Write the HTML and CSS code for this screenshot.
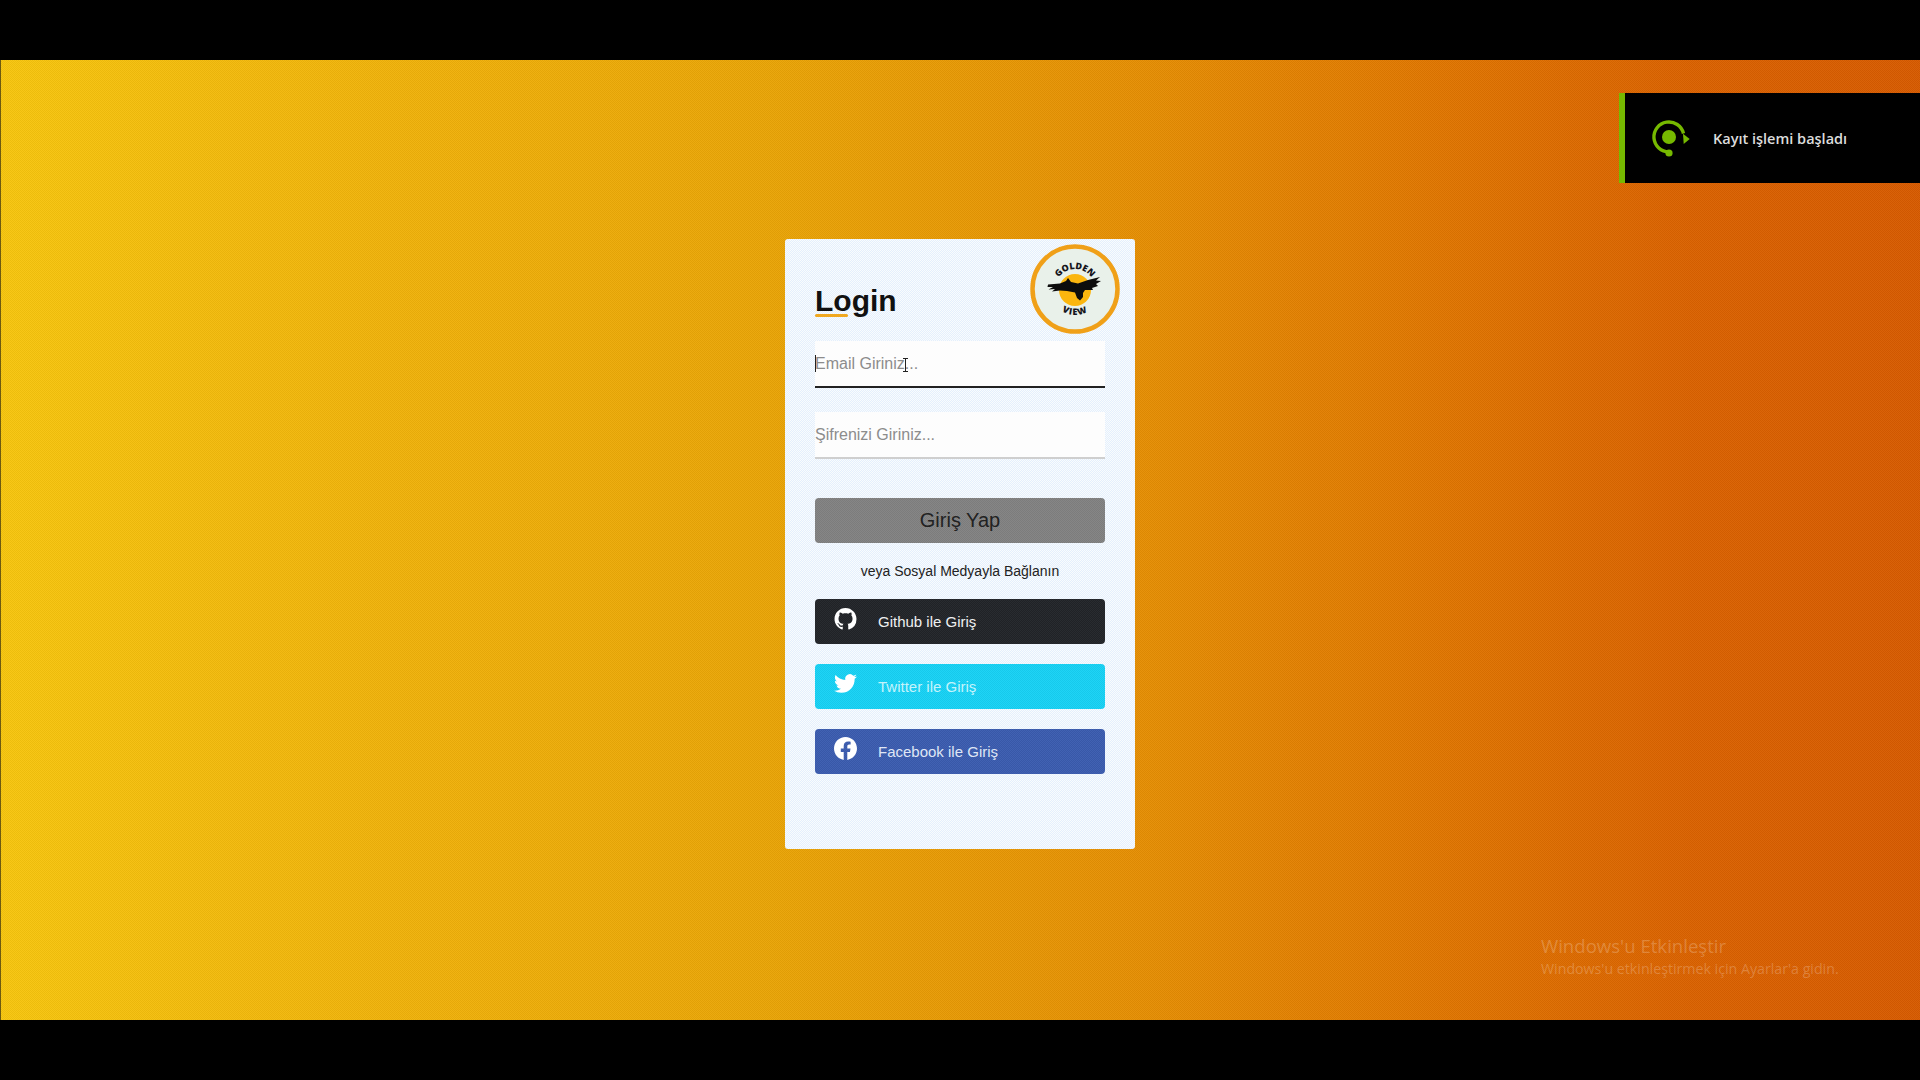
FILE: index.html
```html
<!DOCTYPE html>
<html lang="tr">
<head>
<meta charset="utf-8">
<title>Login</title>
<link rel="stylesheet" href="styles.css">
</head>
<body>
<main class="stage">
  <section class="card">
    <header class="card-head">
      <h1 class="title">Login</h1>
      <svg class="logo" viewBox="0 0 90 90" aria-label="Golden View">
        <circle cx="45" cy="45" r="42.5" fill="#e9f1ea" stroke="#f0a018" stroke-width="4.5"/>
        <circle cx="45" cy="46" r="16" fill="#fbb60f"/>
        <defs>
          <path id="arcTop" d="M25 45 A20 20 0 0 1 65 45"/>
          <path id="arcBottom" d="M19 45 A26 26 0 0 0 71 45"/>
        </defs>
        <text class="logo-text"><textPath href="#arcTop" startOffset="50%" text-anchor="middle">GOLDEN</textPath></text>
        <text class="logo-text logo-text-wide"><textPath href="#arcBottom" startOffset="50%" text-anchor="middle">VIEW</textPath></text>
        <path fill="#0d0d0d" d="M18 40.5 L30 39.5 L36 37 L38 34 L41 38 L48 39.5 L58 36 L70 33 L66 36.5 L71 37 L66 40 L68 42 L62 44 L63 46 L55 46 L53 49 L53 53 L50 56.5 L47 54 L45 48.5 L37 47 L30 46.5 L22 47.5 L25 45 L18.5 45.5 L23 43 L17.5 43 Z"/>
      </svg>
    </header>
    <form class="form">
      <div class="field field-active">
        <span class="caret"></span>
        <input class="input" type="text" placeholder="Email Giriniz...">
        <svg class="ibeam" viewBox="0 0 7 14"><path d="M1 .5h5M3.5.5v13M1 13.5h5" stroke="#222" stroke-width="1" fill="none"/></svg>
      </div>
      <div class="field">
        <input class="input" type="password" placeholder="Şifrenizi Giriniz...">
      </div>
      <button class="submit" type="button">Giriş Yap</button>
      <p class="divider">veya Sosyal Medyayla Bağlanın</p>
      <div class="socials">
        <a class="social github">
          <svg class="social-icon gh" viewBox="0 0 16 16"><path fill="#fff" d="M8 0C3.58 0 0 3.58 0 8c0 3.54 2.29 6.53 5.47 7.59.4.07.55-.17.55-.38 0-.19-.01-.82-.01-1.49-2.01.37-2.53-.49-2.69-.94-.09-.23-.48-.94-.82-1.13-.28-.15-.68-.52-.01-.53.63-.01 1.08.58 1.23.82.72 1.21 1.87.87 2.33.66.07-.52.28-.87.51-1.07-1.78-.2-3.64-.89-3.64-3.95 0-.87.31-1.59.82-2.15-.08-.2-.36-1.02.08-2.12 0 0 .67-.21 2.2.82.64-.18 1.32-.27 2-.27.68 0 1.36.09 2 .27 1.53-1.04 2.2-.82 2.2-.82.44 1.1.16 1.92.08 2.12.51.56.82 1.27.82 2.15 0 3.07-1.87 3.75-3.65 3.95.29.25.54.73.54 1.48 0 1.07-.01 1.93-.01 2.2 0 .21.15.46.55.38A8.013 8.013 0 0016 8c0-4.42-3.58-8-8-8z"/></svg>
          <span>Github ile Giriş</span>
        </a>
        <a class="social twitter">
          <svg class="social-icon" viewBox="0 0 24 24"><path fill="#fff" d="M23.953 4.57a10 10 0 01-2.825.775 4.958 4.958 0 002.163-2.723c-.951.555-2.005.959-3.127 1.184a4.92 4.92 0 00-8.384 4.482C7.69 8.095 4.067 6.13 1.64 3.162a4.822 4.822 0 00-.666 2.475c0 1.71.87 3.213 2.188 4.096a4.904 4.904 0 01-2.228-.616v.06a4.923 4.923 0 003.946 4.827 4.996 4.996 0 01-2.212.085 4.936 4.936 0 004.604 3.417 9.867 9.867 0 01-6.102 2.105c-.39 0-.779-.023-1.17-.067a13.995 13.995 0 007.557 2.209c9.053 0 13.998-7.496 13.998-13.985 0-.21 0-.42-.015-.63A9.935 9.935 0 0024 4.59z"/></svg>
          <span>Twitter ile Giriş</span>
        </a>
        <a class="social facebook">
          <svg class="social-icon" viewBox="0 0 24 24"><path fill="#fff" d="M24 12.073c0-6.627-5.373-12-12-12s-12 5.373-12 12c0 5.99 4.388 10.954 10.125 11.854v-8.385H7.078v-3.47h3.047V9.43c0-3.007 1.792-4.669 4.533-4.669 1.312 0 2.686.235 2.686.235v2.953H15.83c-1.491 0-1.956.925-1.956 1.874v2.25h3.328l-.532 3.47h-2.796v8.385C19.612 23.027 24 18.062 24 12.073z"/></svg>
          <span>Facebook ile Giriş</span>
        </a>
      </div>
    </form>
  </section>

  <aside class="toast">
    <svg class="toast-icon" viewBox="0 0 42 42">
      <path d="M20 35 A15 15 0 1 1 34.5 16.5" fill="none" stroke="#76b900" stroke-width="3.4"/>
      <path d="M40.7 22 L34 16.7 L34.7 27 Z" fill="#76b900"/>
      <circle cx="20" cy="20" r="7" fill="#76b900"/>
      <circle cx="20" cy="36" r="3.6" fill="#76b900"/>
    </svg>
    <span class="toast-text">Kayıt işlemi başladı</span>
  </aside>

  <aside class="watermark">
    <div class="wm-title">Windows'u Etkinleştir</div>
    <div class="wm-sub">Windows'u etkinleştirmek için Ayarlar'a gidin.</div>
  </aside>
</main>
</body>
</html>
```
FILE: styles.css
```css
* { box-sizing: border-box; }

:root {
  --dither-dark: repeating-conic-gradient(rgba(0,0,0,.045) 0 25%, rgba(255,255,255,.035) 0 50%) 0 0 / 2px 2px;
  --dither-light: repeating-conic-gradient(rgba(150,190,255,.2) 0 25%, rgba(255,255,255,.2) 0 50%) 0 0 / 2px 2px;
}

html, body { height: 100%; }

body {
  margin: 0;
  background: #000;
  padding: 60px 0;
  font-family: "Liberation Sans", Arial, sans-serif;
}

.stage {
  position: relative;
  height: 960px;
  padding-top: 8px;
  display: flex;
  justify-content: center;
  align-items: center;
  border-left: 1px solid #6d5a10;
  background:
    var(--dither-dark),
    linear-gradient(90deg, #f8c60e 0%, #f1b30a 20%, #eaa506 40%, #e68e03 60%, #e17600 75%, #db6200 88%, #d85b00 100%);
}

.card {
  position: relative;
  left: -0.5px;
  width: 350px;
  height: 610px;
  padding: 0 30px;
  border-radius: 3px;
  background: var(--dither-light), #f8fbfd;
}

.card-head {
  height: 102px;
  padding-top: 22px;
  display: flex;
  align-items: center;
}

.title {
  position: relative;
  margin: 0;
  font-size: 30px;
  line-height: 36px;
  font-weight: 700;
  color: #111;
}

.title::after {
  content: "";
  position: absolute;
  left: 0;
  bottom: 2px;
  width: 33px;
  height: 3px;
  border-radius: 2px;
  background: #f0a820;
}

.logo {
  position: absolute;
  top: 5px;
  right: 15px;
  width: 90px;
  height: 90px;
}

.logo-text {
  font-family: "Open Sans", sans-serif;
  font-size: 9px;
  font-weight: 800;
  fill: #15151c;
}

.logo-text-wide { letter-spacing: 1px; }

.form { display: flex; flex-direction: column; }

.field {
  position: relative;
  height: 47px;
  margin-bottom: 24px;
  border-bottom: 2px solid #cfcfcf;
  background: #fdfdfd;
}

.field-active { border-bottom-color: #222; }

.input {
  display: block;
  width: 100%;
  height: 100%;
  padding: 0;
  border: 0;
  outline: 0;
  background: transparent;
  font: 16px "Liberation Sans", Arial, sans-serif;
  color: #333;
}

.input::placeholder { color: #8c8c8c; opacity: 1; }

.caret {
  position: absolute;
  left: 0;
  top: 14px;
  width: 1px;
  height: 17px;
  background: #222;
}

.ibeam {
  position: absolute;
  left: 87px;
  top: 17px;
  width: 7px;
  height: 14px;
}

.submit {
  display: block;
  width: 100%;
  height: 45px;
  margin-top: 15px;
  padding: 0;
  border: 0;
  border-radius: 4px;
  background: var(--dither-dark), #828282;
  font: 20px "Liberation Sans", Arial, sans-serif;
  color: #222;
}

.divider {
  margin: 19px 0 18px;
  font-size: 14px;
  line-height: 19px;
  text-align: center;
  color: #222;
}

.socials { display: flex; flex-direction: column; gap: 20px; }

.social {
  display: flex;
  align-items: center;
  height: 45px;
  padding-left: 19px;
  border-radius: 4px;
  font-size: 15px;
  color: #fff;
}

.social span { margin-left: 21px; }

.social-icon {
  width: 23px;
  height: 23px;
  flex: none;
  position: relative;
  top: -3px;
}

.social-icon.gh { width: 23px; height: 22px; }

.github { background: var(--dither-dark), #212428; color: #eef0f0; }
.twitter { background: var(--dither-dark), #17d2f6; color: #c4f3fb; }
.facebook { background: var(--dither-dark), #3b5cb0; color: #dfe6f5; }

.toast {
  position: absolute;
  top: 33px;
  right: 0;
  width: 301px;
  height: 90px;
  padding-left: 24px;
  display: flex;
  align-items: center;
  background: #000;
  border-left: 6px solid #76b900;
}

.toast-icon { width: 42px; height: 42px; flex: none; }

.toast-text {
  margin-left: 22px;
  font-family: "Open Sans", sans-serif;
  font-size: 14.5px;
  font-weight: 600;
  color: #dcdcdc;
  white-space: nowrap;
}

.watermark {
  position: absolute;
  left: 1540px;
  top: 873px;
  color: rgba(255,255,255,.22);
  font-family: "Open Sans", sans-serif;
  white-space: nowrap;
}

.wm-title { font-size: 18.6px; line-height: 26px; }
.wm-sub { font-size: 14.2px; line-height: 20px; }
```
